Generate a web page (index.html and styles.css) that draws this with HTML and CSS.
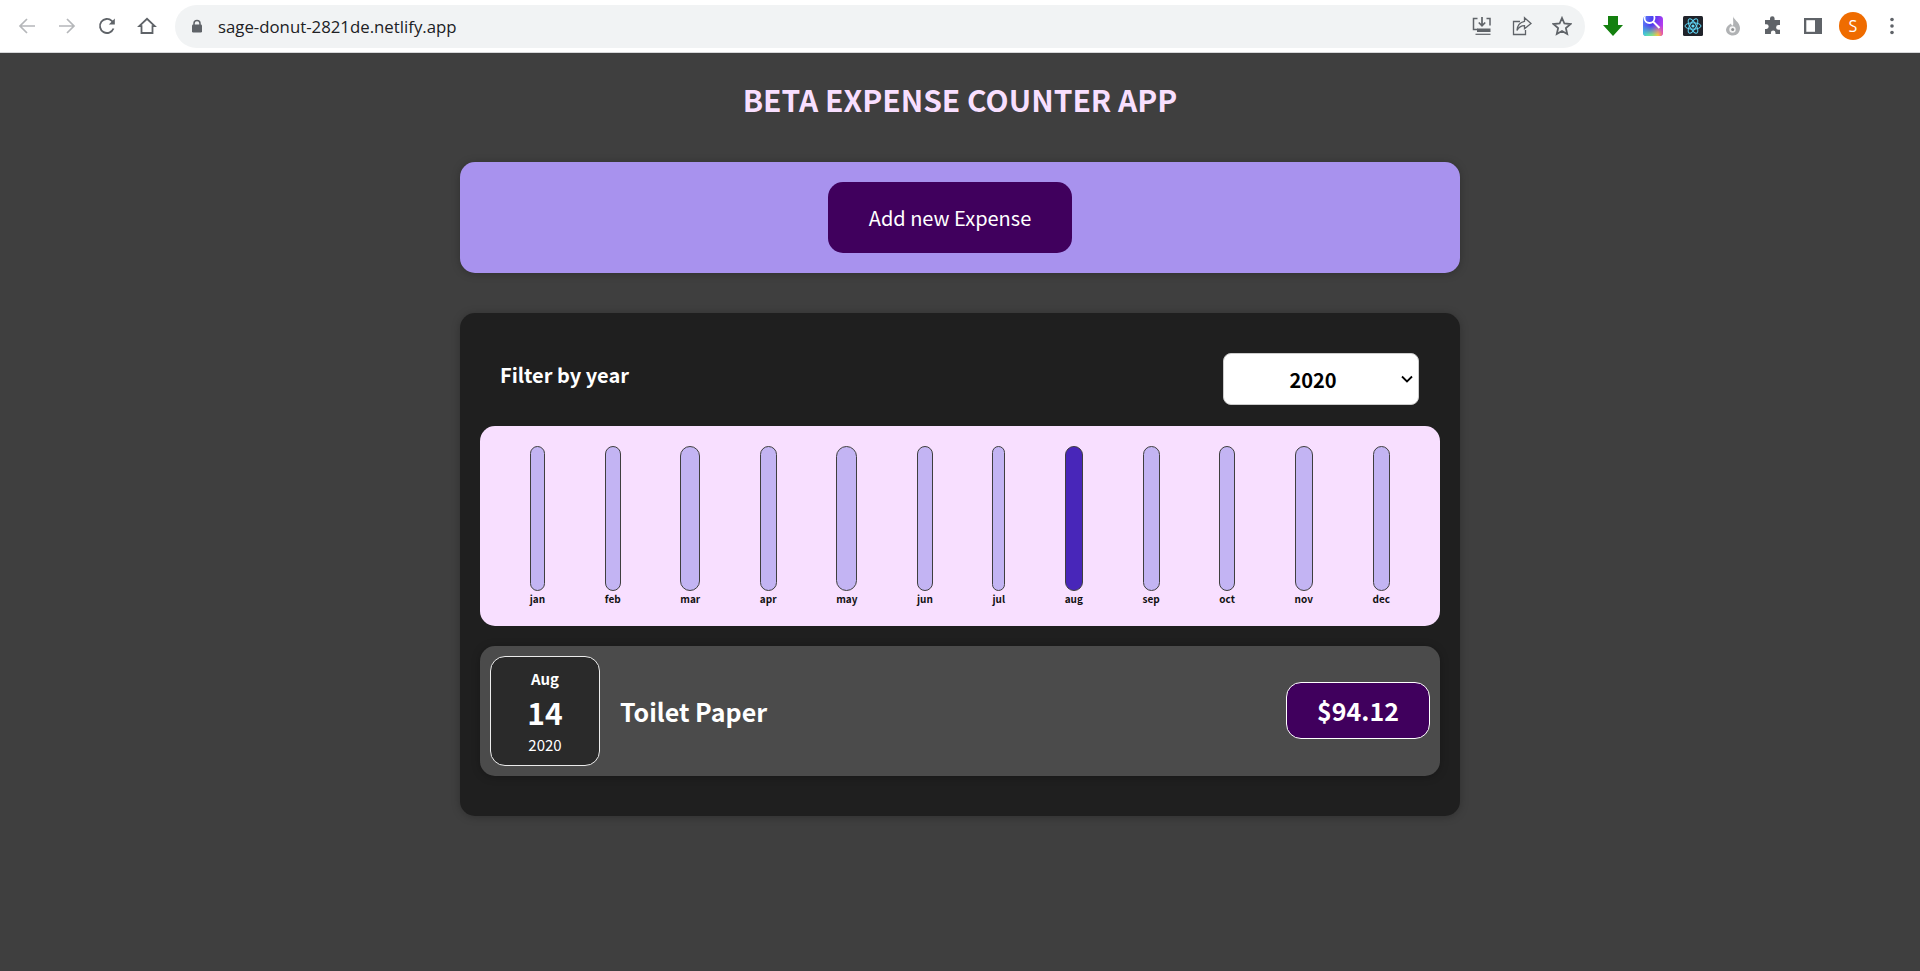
FILE: index.html
```html
<!DOCTYPE html>
<html lang="en">
<head>
  <meta charset="UTF-8" />
  <title>Beta Expense Counter App</title>
  <link rel="stylesheet" href="styles.css">
</head>
<body>
  <!-- Browser toolbar -->
  <header class="toolbar">
    <div class="nav-btns">
      <svg class="nav-icon" viewBox="0 0 20 20"><path d="M18 10H3M10 3 3 10l7 7" fill="none" stroke="#b5b7ba" stroke-width="1.700"/></svg>
      <svg class="nav-icon" viewBox="0 0 20 20"><path d="M2 10h15M10 3l7 7-7 7" fill="none" stroke="#b5b7ba" stroke-width="1.700"/></svg>
      <svg class="nav-icon" viewBox="0 0 20 20"><path d="M16.500 12.500A7 7 0 1 1 14.800 4.900L16.500 6.800" fill="none" stroke="#5f6368" stroke-width="1.800"/><path d="M17.800 2.500v6h-6z" fill="#5f6368"/></svg>
      <svg class="nav-icon" viewBox="0 0 20 20"><path d="M4.500 17V10.200H2.300L10 2.800l7.700 7.400h-2.200V17z" fill="none" stroke="#5f6368" stroke-width="1.800"/></svg>
    </div>
    <div class="omnibox">
      <svg class="lock" viewBox="0 0 12 14"><path d="M3 6V4.500a3 3 0 0 1 6 0V6" fill="none" stroke="#5f6368" stroke-width="1.500"/><rect x="1" y="5.500" width="10" height="8" rx="1.200" fill="#5f6368"/></svg>
      <span class="url">sage-donut-2821de.netlify.app</span>
      <div class="omni-actions">
        <svg class="omni-icon" viewBox="0 0 20 20"><path d="M5.500 2.500H1.500v11H6M14.500 2.500h3.500v7" fill="none" stroke="#5f6368" stroke-width="1.500"/><path d="M10 1v8M6.800 6.500 10 9.800l3.200-3.300" fill="none" stroke="#5f6368" stroke-width="1.700"/><path d="M5 12.500h13.500v3.500H5z" fill="#5f6368"/><path d="M3.500 18.300h15" stroke="#5f6368" stroke-width="1.200"/></svg>
        <svg class="omni-icon" viewBox="0 0 20 20"><path d="M8 5.500H1.500v13h12V14" fill="none" stroke="#5f6368" stroke-width="1.300"/><path d="M12.500 1.800 19 7.500l-6.500 5.200V9.600C9 9.600 6.800 11 5 14.500 5.300 9.500 8 6.200 12.500 5.300z" fill="none" stroke="#5f6368" stroke-width="1.300"/></svg>
        <svg class="omni-icon" viewBox="0 0 20 20"><path d="M10 2l2.400 5.500 6 .6-4.500 4 1.300 5.900L10 15l-5.200 3 1.300-5.900-4.500-4 6-.6z" fill="none" stroke="#5f6368" stroke-width="1.800"/></svg>
      </div>
    </div>
    <div class="ext-btns">
      <svg class="ext-icon" viewBox="0 0 20 20"><path d="M5 0h10v9h5L10 20 0 9h5z" fill="#14800f"/></svg>
      <svg class="ext-icon" viewBox="0 0 20 20">
        <defs>
          <linearGradient id="tile-top" x1="0" y1="0" x2="1" y2=".3"><stop offset="0" stop-color="#5f86f7"/><stop offset=".5" stop-color="#4a3bf0"/><stop offset="1" stop-color="#b43cf0"/></linearGradient>
          <linearGradient id="tile-bottom" x1="0" y1="0" x2="1" y2="0"><stop offset="0" stop-color="#38d6d8"/><stop offset=".45" stop-color="#7fe08a"/><stop offset=".75" stop-color="#f5c73c"/><stop offset="1" stop-color="#f04fa0"/></linearGradient>
          <linearGradient id="tile-fade" x1="0" y1="0" x2="0" y2="1"><stop offset=".45" stop-color="#000"/><stop offset=".95" stop-color="#fff"/></linearGradient>
          <mask id="tile-mask"><rect width="20" height="20" fill="url(#tile-fade)"/></mask>
          <clipPath id="tile-clip"><rect width="20" height="20" rx="3.500"/></clipPath>
        </defs>
        <g clip-path="url(#tile-clip)">
          <rect width="20" height="20" fill="url(#tile-top)"/>
          <rect width="20" height="20" fill="url(#tile-bottom)" mask="url(#tile-mask)"/>
          <circle cx="6.500" cy="2" r="5" fill="none" stroke="#fff" stroke-width="1.800"/>
          <path d="M10 5.500l6.500 6.500" stroke="#fff" stroke-width="2"/>
        </g>
      </svg>
      <svg class="ext-icon" viewBox="0 0 20 20"><rect width="20" height="20" rx="1.500" fill="#20232a"/><g fill="none" stroke="#61dafb" stroke-width="1"><ellipse cx="10" cy="10" rx="8" ry="3.200"/><ellipse cx="10" cy="10" rx="8" ry="3.200" transform="rotate(60 10 10)"/><ellipse cx="10" cy="10" rx="8" ry="3.200" transform="rotate(120 10 10)"/></g><circle cx="10" cy="10" r="1.600" fill="#61dafb"/></svg>
      <svg class="ext-icon" viewBox="0 0 20 20"><path d="M10.500 0c-1 3 6.500 6 6.500 12 0 4.500-3 7.500-7 7.500S3 17 3 13.500C3.500 10.500 5.500 9 8 7.500 8.500 9 8.500 9.500 9.800 9.500 11 8 9.500 4 10.500 0z" fill="#b0b2b4"/><circle cx="9.500" cy="13.500" r="3.200" fill="#f4f4f4"/><circle cx="9.700" cy="13.500" r="1.500" fill="#8e9092"/></svg>
      <svg class="ext-icon puzzle" viewBox="0 0 20 20"><path d="M7 2.500a2.300 2.300 0 0 1 4.600 0V4H17v5h-1.500a2.400 2.400 0 0 0 0 4.800H17V18h-4.500v-1.300a2.300 2.300 0 0 0-4.600 0V18H2v-5h1.300a2.400 2.400 0 0 0 0-4.800H2V4h5z" fill="#5f6368"/></svg>
      <svg class="ext-icon panel" viewBox="0 0 18 18"><path d="M0 1h18v16H0z" fill="#5f6368"/><path d="M2.300 3.200h8.700v11.600H2.300z" fill="#fff"/></svg>
      <div class="avatar">S</div>
      <svg class="ext-icon menu" viewBox="0 0 4 18"><circle cx="2" cy="2.500" r="1.800" fill="#5f6368"/><circle cx="2" cy="9" r="1.800" fill="#5f6368"/><circle cx="2" cy="15.500" r="1.800" fill="#5f6368"/></svg>
    </div>
  </header>

  <main class="app">
    <h1 class="app-title">BETA EXPENSE COUNTER APP</h1>

    <section class="new-expense">
      <button class="add-btn" type="button">Add new Expense</button>
    </section>

    <section class="expenses">
      <div class="filter">
        <label class="filter-label" for="year">Filter by year</label>
        <div class="select-wrap">
          <select class="filter-select" id="year">
            <option>2020</option>
            <option>2021</option>
            <option>2022</option>
          </select>
          <svg class="select-arrow" viewBox="0 0 12 8"><path d="M1 1.500l5 5 5-5" fill="none" stroke="#000" stroke-width="1.800"/></svg>
        </div>
      </div>

      <div class="chart">
        <div class="chart-col"><div class="chart-bar"></div><span class="chart-label">jan</span></div>
        <div class="chart-col"><div class="chart-bar"></div><span class="chart-label">feb</span></div>
        <div class="chart-col"><div class="chart-bar"></div><span class="chart-label">mar</span></div>
        <div class="chart-col"><div class="chart-bar"></div><span class="chart-label">apr</span></div>
        <div class="chart-col"><div class="chart-bar"></div><span class="chart-label">may</span></div>
        <div class="chart-col"><div class="chart-bar"></div><span class="chart-label">jun</span></div>
        <div class="chart-col"><div class="chart-bar"></div><span class="chart-label">jul</span></div>
        <div class="chart-col"><div class="chart-bar active"></div><span class="chart-label">aug</span></div>
        <div class="chart-col"><div class="chart-bar"></div><span class="chart-label">sep</span></div>
        <div class="chart-col"><div class="chart-bar"></div><span class="chart-label">oct</span></div>
        <div class="chart-col"><div class="chart-bar"></div><span class="chart-label">nov</span></div>
        <div class="chart-col"><div class="chart-bar"></div><span class="chart-label">dec</span></div>
      </div>

      <article class="expense-item">
        <div class="expense-date">
          <div class="date-month">Aug</div>
          <div class="date-day">14</div>
          <div class="date-year">2020</div>
        </div>
        <h2 class="expense-title">Toilet Paper</h2>
        <div class="expense-price">$94.12</div>
      </article>
    </section>
  </main>
</body>
</html>
```

FILE: styles.css
```css
* {
  box-sizing: border-box;
}

body {
  margin: 0;
  min-height: 100vh;
  background: #3f3f3f;
  font-family: "Noto Sans CJK SC", "Noto Sans", sans-serif;
}

/* Browser toolbar */
.toolbar {
  display: flex;
  align-items: center;
  height: 53px;
  padding: 0 0 0 7px;
  background: #fff;
  border-bottom: 1px solid #d6d7d9;
}

.nav-btns {
  display: flex;
  width: 168px;
}

.nav-icon {
  width: 20px;
  height: 20px;
  margin: 0 10px;
}

.omnibox {
  display: flex;
  align-items: center;
  width: 1410px;
  height: 43px;
  padding: 0 13px 0 16px;
  background: #f1f3f4;
  border-radius: 22px;
}

.lock {
  width: 12px;
  height: 14px;
}

.url {
  margin-left: 15px;
  font-family: "Open Sans", sans-serif;
  font-size: 16.800px;
  color: #202124;
}

.omni-actions {
  display: flex;
  gap: 20px;
  margin-left: auto;
}

.omni-icon {
  width: 20px;
  height: 20px;
}

.ext-btns {
  display: flex;
  align-items: center;
  flex: 1;
  padding-left: 18px;
}

.ext-icon {
  width: 20px;
  height: 20px;
  margin-right: 20px;
}

.panel {
  width: 18px;
  height: 18px;
  margin-left: 1px;
  margin-right: 10px;
}

.avatar {
  width: 28px;
  height: 28px;
  margin: 0 0 0 7px;
  border-radius: 50%;
  background: #ef6c00;
  color: #fff;
  font-family: "Open Sans", sans-serif;
  font-size: 16px;
  line-height: 28px;
  text-align: center;
}

.menu {
  width: 4px;
  height: 18px;
  margin: 0 0 0 23px;
}

/* App */
.app {
  width: 1000px;
  margin: 0 auto;
}

.app-title {
  margin: 24px 0 41px;
  font-size: 30px;
  line-height: 44px;
  font-weight: 700;
  text-align: center;
  color: #f8dfff;
}

.new-expense {
  display: flex;
  justify-content: center;
  padding: 20px;
  margin-bottom: 40px;
  background: #a892ee;
  border-radius: 15px;
  box-shadow: 0 1px 8px rgba(0, 0, 0, 0.25);
}

.add-btn {
  width: 244px;
  height: 71px;
  margin-right: 20px;
  border: none;
  border-radius: 15px;
  background: #40005d;
  color: #fff;
  font-family: inherit;
  font-size: 20px;
}

.expenses {
  padding: 40px 20px;
  background: #1f1f1f;
  border-radius: 15px;
  box-shadow: 0 1px 8px rgba(0, 0, 0, 0.25);
}

.filter {
  display: flex;
  justify-content: space-between;
  align-items: center;
  padding: 0 21px 0 20px;
  margin-bottom: 21px;
}

.filter-label {
  margin-top: -8px;
  font-size: 20px;
  line-height: 28px;
  font-weight: 700;
  color: #fff;
}

.select-wrap {
  position: relative;
  width: 196px;
  height: 52px;
}

.filter-select {
  width: 100%;
  height: 100%;
  padding: 0 16px 0 0;
  border: 1px solid #ccc;
  border-radius: 8px;
  background: #fff;
  appearance: none;
  font-family: inherit;
  font-size: 20px;
  font-weight: 700;
  text-align: center;
  color: #000;
}

.select-arrow {
  position: absolute;
  top: 22px;
  right: 6px;
  width: 12px;
  height: 8px;
  pointer-events: none;
}

/* Chart */
.chart {
  display: flex;
  justify-content: space-around;
  height: 200px;
  padding: 20px;
  margin-bottom: 20px;
  background: #f8dfff;
  border-radius: 15px;
}

.chart-col {
  display: flex;
  flex-direction: column;
  align-items: stretch;
}

.chart-bar {
  flex: none;
  height: 145px;
  border: 1px solid #3f3f3f;
  border-radius: 12px;
  background: #c3b4f3;
}

.chart-bar.active {
  background: #4826b9;
}

.chart-label {
  margin-top: 1px;
  font-size: 10px;
  line-height: 13px;
  font-weight: 700;
  text-align: center;
  color: #111;
}

/* Expense row */
.expense-item {
  display: flex;
  align-items: center;
  height: 130px;
  padding: 10px;
  background: #4b4b4b;
  border-radius: 15px;
  box-shadow: 0 1px 8px rgba(0, 0, 0, 0.25);
}

.expense-date {
  display: flex;
  flex-direction: column;
  align-items: center;
  justify-content: center;
  width: 110px;
  height: 110px;
  background: #2a2a2a;
  border: 1px solid #ececec;
  border-radius: 15px;
  color: #fff;
}

.date-month {
  padding-top: 1px;
  font-size: 15px;
  line-height: 22px;
  font-weight: 700;
}

.date-day {
  font-size: 30px;
  line-height: 44px;
  font-weight: 700;
}

.date-year {
  font-size: 15px;
  line-height: 22px;
}

.expense-title {
  flex: 1;
  margin: 0 0 0 20px;
  font-size: 25px;
  line-height: 36px;
  font-weight: 700;
  color: #fff;
}

.expense-price {
  width: 144px;
  height: 57px;
  margin-bottom: 1px;
  background: #40005d;
  border: 1px solid #fff;
  border-radius: 15px;
  font-size: 25px;
  line-height: 55px;
  font-weight: 700;
  text-align: center;
  color: #fff;
}
```
